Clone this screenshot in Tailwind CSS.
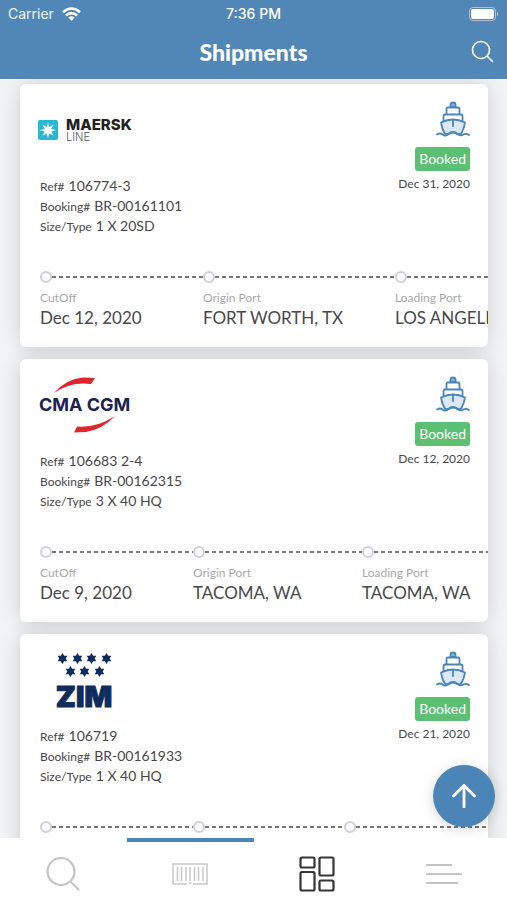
<!DOCTYPE html>
<html lang="en">
<head>
<meta charset="utf-8">
<meta name="viewport" content="width=device-width, initial-scale=1">
<title>Shipments</title>
<script src="https://cdn.jsdelivr.net/npm/@tailwindcss/browser@4"></script>
</head>
<body class="relative flex h-dvh flex-col overflow-hidden bg-[#f3f4f6] font-[Lato,sans-serif] text-[#484848]">
<svg class="hidden" aria-hidden="true">
  <symbol id="ship" viewBox="0 0 34 36">
    <g fill="none" stroke="#4885ba" stroke-width="1.8" stroke-linejoin="round" stroke-linecap="round">
      <path d="M5 21.500Q11 18.500 17 18.500T29 21.500C28.500 25.500 27.500 28.500 25.500 32Q23.500 34 21 32.500 19.500 31 17 31 14.500 31 13 32.500 10.500 34 8.500 32 6 28 5 21.500Z" fill="#dbe7f6"/>
      <path d="M7.500 20V15Q7.500 13.500 9 13.500H25Q26.500 13.500 26.500 15V20M10.500 13V8Q10.500 6.500 12 6.500H22Q23.500 6.500 23.500 8V13" />
      <path d="M14.500 6V3.500Q14.500 1.500 17 1.500T19.500 3.500V6Z" fill="#8db3d8"/>
      <path d="M17 19V25"/>
      <path d="M1 33.500Q4 31.500 6.500 33.500T12 33.500Q14.500 31.500 17 31.500T22 33.500Q25 35 27.500 33.500T33 34"/>
    </g>
  </symbol>
  <symbol id="star6" viewBox="0 0 12 12">
    <path d="M6 0 7.800 3H11.200L9.500 6 11.200 9H7.800L6 12 4.200 9H.8L2.500 6 .8 3H4.200Z" fill="#0f2c5c"/>
  </symbol>
</svg>

<header class="shrink-0 bg-[#5087b6] text-white">
  <div class="grid h-7 grid-cols-3 items-center px-2 font-[Inter,sans-serif] text-sm">
    <div class="flex items-center gap-2 text-white/90">Carrier
      <svg class="h-[14px] w-[19px]" viewBox="0 0 19 14" fill="none" stroke="#fff" stroke-width="2.600"><path d="M1 5.300Q9.500-2.300 18 5.300M4 8.500Q9.500 3.600 15 8.500"/><path d="M6.300 10.500Q9.500 7.900 12.700 10.500L9.500 13.700Z" fill="#fff" stroke="none"/></svg>
    </div>
    <div class="text-center font-medium">7:36 PM</div>
    <svg class="h-[14px] w-[30px] justify-self-end" viewBox="0 0 30 14"><rect x=".5" y=".5" width="26" height="13" rx="3.500" fill="none" stroke="#fff" stroke-opacity=".5"/><rect x="2" y="2" width="23" height="10" rx="2" fill="#fff"/><path d="M28 4.500Q30 7 28 9.500Z" fill="#fff" fill-opacity=".6"/></svg>
  </div>
  <div class="grid h-[51px] grid-cols-[1fr_auto_1fr] items-center px-[13px] pb-1">
    <h1 class="col-start-2 text-[23px] leading-7 font-black">Shipments</h1>
    <button class="justify-self-end" aria-label="Search"><svg class="size-[23px]" viewBox="0 0 23 23" fill="none" stroke="#fff" stroke-width="1.600"><circle cx="10" cy="10" r="8.500"/><path d="M16 16 22 22"/></svg></button>
  </div>
</header>

<main class="flex min-h-0 flex-1 flex-col gap-3 overflow-hidden pt-[5px] pr-[19px] pl-5">
  <article class="flex min-h-[263px] shrink-0 flex-col overflow-hidden rounded-md bg-white pl-5 shadow-[0_0_22px_rgba(0,0,0,0.16)]">
    <div class="flex h-[183px] justify-between pt-[17px] pr-[18px]">
      <div>
        <div class="-ml-0.5 flex h-[75px] items-start gap-2 pt-[17px] font-[Inter,sans-serif]">
          <svg class="mt-[2px] size-5" viewBox="0 0 20 20"><rect width="20" height="20" rx="2" fill="#27b8d4"/><path d="M10 2.500 11.300 7 15.500 4.500 13.300 8.800 18 10.200 13.300 11.500 15.500 15.800 11.300 13.500 10 18 8.700 13.500 4.500 15.800 6.700 11.500 2 10.200 6.700 8.800 4.500 4.500 8.700 7Z" fill="#fff"/></svg>
          <div><div class="text-[15px] leading-[14px] font-extrabold text-[#222]">MAERSK</div><div class="text-[11px] leading-[11px] font-light text-[#555]">LINE</div></div>
        </div>
        <div class="text-sm">
          <p class="flex h-5 items-baseline gap-1"><span class="text-xs">Ref#</span> 106774-3</p>
          <p class="flex h-5 items-baseline gap-1"><span class="text-xs">Booking#</span> BR-00161101</p>
          <p class="flex h-5 items-baseline gap-1"><span class="text-xs">Size/Type</span> 1 X 20SD</p>
        </div>
      </div>
      <div class="flex flex-col items-end">
        <svg class="h-9 w-[34px]"><use href="#ship"/></svg>
        <span class="mt-[10px] rounded-[3px] bg-[#5cc072] px-1 text-sm leading-6 text-white">Booked</span>
        <time class="mt-1 text-xs leading-[18px]">Dec 31, 2020</time>
      </div>
    </div>
    <ol class="flex pt-1 whitespace-nowrap">
      <li class="w-[163px] shrink-0"><div class="flex h-3 items-center"><i class="size-3 shrink-0 rounded-full border-2 border-[#cfd0da]"></i><i class="h-[2px] flex-1 bg-[repeating-linear-gradient(90deg,#777_0_4px,transparent_4px_7px)]"></i></div><div class="mt-[7px] text-xs leading-4 text-[#a9a9a9]">CutOff</div><div class="text-[17px] leading-6">Dec 12, 2020</div></li>
      <li class="w-[192px] shrink-0"><div class="flex h-3 items-center"><i class="size-3 shrink-0 rounded-full border-2 border-[#cfd0da]"></i><i class="h-[2px] flex-1 bg-[repeating-linear-gradient(90deg,#777_0_4px,transparent_4px_7px)]"></i></div><div class="mt-[7px] text-xs leading-4 text-[#a9a9a9]">Origin Port</div><div class="text-[17px] leading-6">FORT WORTH, TX</div></li>
      <li class="w-[192px] shrink-0"><div class="flex h-3 items-center"><i class="size-3 shrink-0 rounded-full border-2 border-[#cfd0da]"></i><i class="h-[2px] flex-1 bg-[repeating-linear-gradient(90deg,#777_0_4px,transparent_4px_7px)]"></i></div><div class="mt-[7px] text-xs leading-4 text-[#a9a9a9]">Loading Port</div><div class="text-[17px] leading-6">LOS ANGELES</div></li>
    </ol>
  </article>

  <article class="flex min-h-[263px] shrink-0 flex-col overflow-hidden rounded-md bg-white pl-5 shadow-[0_0_22px_rgba(0,0,0,0.16)]">
    <div class="flex h-[183px] justify-between pt-[17px] pr-[18px]">
      <div>
        <div class="-ml-0.5 h-[75px]">
          <svg class="h-[62px] w-[94px]" viewBox="0 0 94 62"><path d="M16 17Q28 3 45 1.500L57 2 53 8Q33 5 16 17Z" fill="#e0262d"/><path d="M77 40Q65 53 48 56L36 56.500 39 50.500Q59 52 77 40Z" fill="#e0262d"/><text x="1" y="35" font-family="Inter, sans-serif" font-size="18" font-weight="700" fill="#1e2250">CMA CGM</text></svg>
        </div>
        <div class="text-sm">
          <p class="flex h-5 items-baseline gap-1"><span class="text-xs">Ref#</span> 106683 2-4</p>
          <p class="flex h-5 items-baseline gap-1"><span class="text-xs">Booking#</span> BR-00162315</p>
          <p class="flex h-5 items-baseline gap-1"><span class="text-xs">Size/Type</span> 3 X 40 HQ</p>
        </div>
      </div>
      <div class="flex flex-col items-end">
        <svg class="h-9 w-[34px]"><use href="#ship"/></svg>
        <span class="mt-[10px] rounded-[3px] bg-[#5cc072] px-1 text-sm leading-6 text-white">Booked</span>
        <time class="mt-1 text-xs leading-[18px]">Dec 12, 2020</time>
      </div>
    </div>
    <ol class="flex pt-1 whitespace-nowrap">
      <li class="w-[153px] shrink-0"><div class="flex h-3 items-center"><i class="size-3 shrink-0 rounded-full border-2 border-[#cfd0da]"></i><i class="h-[2px] flex-1 bg-[repeating-linear-gradient(90deg,#777_0_4px,transparent_4px_7px)]"></i></div><div class="mt-[7px] text-xs leading-4 text-[#a9a9a9]">CutOff</div><div class="text-[17px] leading-6">Dec 9, 2020</div></li>
      <li class="w-[169px] shrink-0"><div class="flex h-3 items-center"><i class="size-3 shrink-0 rounded-full border-2 border-[#cfd0da]"></i><i class="h-[2px] flex-1 bg-[repeating-linear-gradient(90deg,#777_0_4px,transparent_4px_7px)]"></i></div><div class="mt-[7px] text-xs leading-4 text-[#a9a9a9]">Origin Port</div><div class="text-[17px] leading-6">TACOMA, WA</div></li>
      <li class="w-[169px] shrink-0"><div class="flex h-3 items-center"><i class="size-3 shrink-0 rounded-full border-2 border-[#cfd0da]"></i><i class="h-[2px] flex-1 bg-[repeating-linear-gradient(90deg,#777_0_4px,transparent_4px_7px)]"></i></div><div class="mt-[7px] text-xs leading-4 text-[#a9a9a9]">Loading Port</div><div class="text-[17px] leading-6">TACOMA, WA</div></li>
    </ol>
  </article>

  <article class="flex min-h-[263px] shrink-0 flex-col overflow-hidden rounded-md bg-white pl-5 shadow-[0_0_22px_rgba(0,0,0,0.16)]">
    <div class="flex h-[183px] justify-between pt-[17px] pr-[18px]">
      <div>
        <div class="-ml-0.5 h-[75px]">
          <svg class="h-[66px] w-[94px]" viewBox="0 0 94 66">
            <use href="#star6" x="19" y="2" width="11" height="11"/><use href="#star6" x="34" y="2" width="11" height="11"/><use href="#star6" x="48" y="2" width="11" height="11"/><use href="#star6" x="63" y="2" width="11" height="11"/>
            <use href="#star6" x="27" y="15" width="11" height="11"/><use href="#star6" x="41" y="15" width="11" height="11"/><use href="#star6" x="56" y="15" width="11" height="11"/>
            <text x="46" y="56" text-anchor="middle" font-family="Inter, sans-serif" font-size="29" font-weight="900" fill="#0f2c5c" stroke="#0f2c5c">ZIM</text>
          </svg>
        </div>
        <div class="text-sm">
          <p class="flex h-5 items-baseline gap-1"><span class="text-xs">Ref#</span> 106719</p>
          <p class="flex h-5 items-baseline gap-1"><span class="text-xs">Booking#</span> BR-00161933</p>
          <p class="flex h-5 items-baseline gap-1"><span class="text-xs">Size/Type</span> 1 X 40 HQ</p>
        </div>
      </div>
      <div class="flex flex-col items-end">
        <svg class="h-9 w-[34px]"><use href="#ship"/></svg>
        <span class="mt-[10px] rounded-[3px] bg-[#5cc072] px-1 text-sm leading-6 text-white">Booked</span>
        <time class="mt-1 text-xs leading-[18px]">Dec 21, 2020</time>
      </div>
    </div>
    <ol class="flex pt-1 whitespace-nowrap">
      <li class="w-[153px] shrink-0"><div class="flex h-3 items-center"><i class="size-3 shrink-0 rounded-full border-2 border-[#cfd0da]"></i><i class="h-[2px] flex-1 bg-[repeating-linear-gradient(90deg,#777_0_4px,transparent_4px_7px)]"></i></div></li>
      <li class="w-[151px] shrink-0"><div class="flex h-3 items-center"><i class="size-3 shrink-0 rounded-full border-2 border-[#cfd0da]"></i><i class="h-[2px] flex-1 bg-[repeating-linear-gradient(90deg,#777_0_4px,transparent_4px_7px)]"></i></div></li>
      <li class="w-[169px] shrink-0"><div class="flex h-3 items-center"><i class="size-3 shrink-0 rounded-full border-2 border-[#cfd0da]"></i><i class="h-[2px] flex-1 bg-[repeating-linear-gradient(90deg,#777_0_4px,transparent_4px_7px)]"></i></div></li>
    </ol>
  </article>
</main>

<button class="absolute right-3 bottom-[73px] flex size-[62px] items-center justify-center rounded-full bg-[#4b85b8] shadow-[0_2px_14px_rgba(0,0,0,0.16)]" aria-label="Scroll to top">
  <svg class="size-6" viewBox="0 0 24 24" fill="none" stroke="#fff" stroke-width="2.800" stroke-linecap="round" stroke-linejoin="round"><path d="M12 23V1.500M1.500 12 12 1.500 22.500 12"/></svg>
</button>

<nav class="relative grid h-[62px] shrink-0 grid-cols-4 bg-white">
  <a href="#" aria-label="Search" class="flex items-center justify-center border-t-4 border-transparent pt-[5px]"><svg class="size-[34px]" viewBox="0 0 34 34" fill="none" stroke="#c4c4c4" stroke-width="2.200"><circle cx="15" cy="14.500" r="13.500"/><path d="M24 24 33 33"/></svg></a>
  <a href="#" aria-label="Containers" class="flex items-center justify-center border-t-4 border-[#4b85b8] pt-[5px]"><svg class="h-[22px] w-9" viewBox="0 0 36 22" fill="none" stroke="#c8c8c8" stroke-width="1.500"><path d="M15 21H1V1H35V21H21M16.500 20H19.500"/><path d="M5.500 4V18M9.500 4V18M14 4V18M18 4V18M22.500 4V18M26.500 4V18M31 4V18"/></svg></a>
  <a href="#" aria-label="Dashboard" class="flex items-center justify-center border-t-4 border-transparent pt-[5px]"><svg class="size-9" viewBox="0 0 36 36" fill="none" stroke="#353535" stroke-width="2.200"><rect x="1.500" y="1.500" width="14" height="10" rx="1.500"/><rect x="20.500" y="1.500" width="14" height="18" rx="1.500"/><rect x="1.500" y="16" width="14" height="18.500" rx="1.500"/><rect x="20.500" y="24.500" width="14" height="10" rx="1.500"/></svg></a>
  <a href="#" aria-label="Menu" class="flex items-center justify-center border-t-4 border-transparent pt-[5px]"><svg class="h-[22px] w-9" viewBox="0 0 36 22" stroke="#c4c4c4" stroke-width="2.200"><path d="M0 2H26M0 11H36M0 20H32"/></svg></a>
</nav>
</body>
</html>
